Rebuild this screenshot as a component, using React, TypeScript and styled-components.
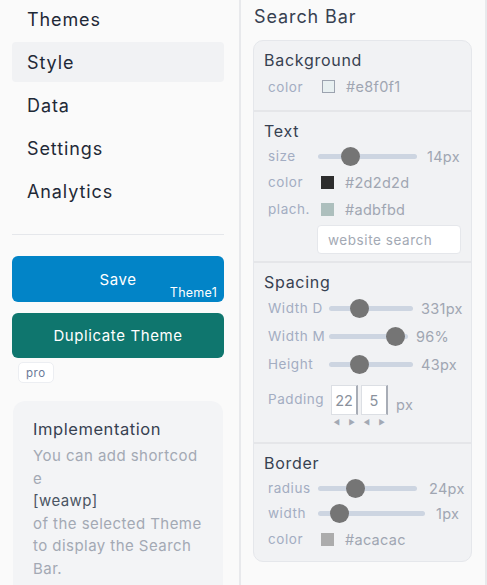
import React from "react";
import styled, { createGlobalStyle } from "styled-components";

const Global = createGlobalStyle`
  html, body { margin: 0; padding: 0; background: #fafafa; }
  body { font-family: "Inter", "Noto Sans", sans-serif; letter-spacing: 0.035em; -webkit-font-smoothing: antialiased; }
  input { letter-spacing: inherit; }
  * { box-sizing: border-box; }
`;

const Page = styled.div`
  display: flex;
  width: 487px;
  height: 585px;
  overflow: hidden;
  background: #fafafa;
`;

const Sidebar = styled.aside`
  width: 241px;
  flex: none;
  padding: 0 15px 0 12px;
  border-right: 2px solid #e8e9ec;
  display: flex;
  flex-direction: column;
`;

const Nav = styled.nav`
  display: flex;
  flex-direction: column;
  gap: 3px;
  margin-top: -1px;
`;

const NavItem = styled.div<{ $active?: boolean }>`
  height: 40px;
  display: flex;
  align-items: center;
  padding-left: 15px;
  font-size: 18px;
  letter-spacing: 0.05em;
  color: #1f2937;
  border-radius: 4px;
  background: ${(p) => (p.$active ? "#f1f2f4" : "transparent")};
`;

const Divider = styled.hr`
  border: none;
  height: 1px;
  background: #e5e7eb;
  margin: 23px 0 21px;
`;

const Button = styled.button<{ $bg: string; $h: number }>`
  position: relative;
  width: 100%;
  height: ${(p) => p.$h}px;
  border: none;
  border-radius: 6px;
  background: ${(p) => p.$bg};
  color: #fff;
  font-family: inherit;
  letter-spacing: 0.04em;
  font-size: 15px;
  display: flex;
  align-items: center;
  justify-content: center;
  padding: 0;
`;

const ButtonTag = styled.span`
  position: absolute;
  right: 7px;
  bottom: 2px;
  font-size: 12.5px;
  letter-spacing: 0.02em;
`;

const DupButton = styled(Button)`
  margin-top: 11px;
`;

const ProBadge = styled.span`
  align-self: flex-start;
  margin: 4px 0 0 6px;
  height: 21px;
  padding: 0 7px;
  display: flex;
  align-items: center;
  font-size: 11.5px;
  color: #6b7a99;
  background: #fff;
  border: 1px solid #eceef2;
  border-radius: 5px;
`;

const InfoBox = styled.div`
  margin: 18px 1px 0 1px;
  flex: 1;
  background: #f3f4f6;
  border-radius: 12px 12px 0 0;
  padding: 16px 17px 0 20px;
`;

const InfoTitle = styled.div`
  font-size: 16.5px;
  color: #374151;
  line-height: 24px;
  margin-bottom: 4px;
`;

const InfoText = styled.div`
  font-size: 15px;
  line-height: 22.5px;
  letter-spacing: 0.03em;
  color: #a3a9b4;
  word-break: break-all;
`;

const Code = styled.div`
  color: #4b5563;
`;

const InfoTail = styled.div`
  word-break: normal;
`;

const Main = styled.main`
  width: 246px;
  flex: none;
  border-right: 2px solid #e8e9ec;
  padding: 0 13px 0 12px;
`;

const MainTitle = styled.h2`
  margin: 0;
  height: 40px;
  padding-top: 5px;
  padding-left: 1px;
  font-size: 18px;
  font-weight: 400;
  line-height: 24px;
  letter-spacing: 0.05em;
  color: #374151;
`;

const Card = styled.div`
  background: #f1f2f4;
  border: 1px solid #e5e7eb;
  border-radius: 10px;
  overflow: hidden;
`;

const Section = styled.section<{ $pb: number }>`
  padding: 7px 10px ${(p) => p.$pb}px 10px;
  & + & {
    border-top: 2px solid #e5e6e9;
  }
`;

const SectionTitle = styled.div`
  font-size: 16px;
  line-height: 24px;
  letter-spacing: 0.045em;
  color: #374151;
`;

const Row = styled.div<{ $h: number; $label: number }>`
  height: ${(p) => p.$h}px;
  display: grid;
  grid-template-columns: ${(p) => p.$label}px auto auto;
  justify-content: start;
  align-items: center;
  padding-left: 4px;
`;

const Label = styled.span`
  font-size: 13.5px;
  color: #a3adc2;
`;

const Value = styled.span<{ $gap: number }>`
  margin-left: ${(p) => p.$gap}px;
  font-size: 14.5px;
  letter-spacing: 0.02em;
  color: #a0a6b2;
`;

const Swatch = styled.span<{ $color: string; $border?: boolean }>`
  width: 13px;
  height: 13px;
  margin-left: 3px;
  background: ${(p) => p.$color};
  border: ${(p) => (p.$border ? "1px solid #9ca3af" : "none")};
`;

const Track = styled.div<{ $w: number }>`
  position: relative;
  width: ${(p) => p.$w}px;
  height: 5px;
  border-radius: 3px;
  background: #cdd5e1;
`;

const Thumb = styled.span`
  position: absolute;
  top: 50%;
  width: 19px;
  height: 19px;
  margin: -9.5px 0 0 -9.5px;
  border-radius: 50%;
  background: #757575;
`;

const SearchInput = styled.input`
  display: block;
  margin: 2px 0 0 53px;
  width: 144px;
  height: 29px;
  border: 1px solid #e5e7eb;
  border-radius: 4px;
  background: #fff;
  padding: 0 10px;
  font-family: inherit;
  font-size: 13.5px;
  &::placeholder { color: #a3a9b4; }
`;

const PadRow = styled.div`
  display: flex;
  align-items: flex-start;
  padding-left: 4px;
  margin-top: 7px;
`;

const PadLabel = styled(Label)`
  width: 63px;
  margin-top: 6px;
`;

const PadGroup = styled.div`
  display: flex;
  flex-direction: column;
  align-items: center;
`;

const PadBox = styled.div`
  width: 27px;
  height: 30px;
  background: #fff;
  border: 1px solid #dcdfe4;
  border-right: 2px solid #a8adb6;
  display: flex;
  align-items: center;
  justify-content: center;
  font-size: 14.5px;
  letter-spacing: 0;
  color: #8a919c;
`;

const PadArrows = styled.div`
  display: flex;
  gap: 8px;
  margin-top: 3px;
  font-size: 7px;
  color: #a3a9b4;
  line-height: 10px;
`;

const PadUnit = styled.span`
  margin: 11px 0 0 8px;
  font-size: 14.5px;
  color: #a0a6b2;
`;

const PadBoxes = styled.div`
  display: flex;
  gap: 3px;
`;

const Slider = ({ w, pos }: { w: number; pos: number }) => (
  <Track $w={w}>
    <Thumb style={{ left: pos }} />
  </Track>
);

const Pad = ({ v }: { v: string }) => (
  <PadGroup>
    <PadBox>{v}</PadBox>
    <PadArrows>
      <span>◀</span>
      <span>▶</span>
    </PadArrows>
  </PadGroup>
);

export default function App() {
  return (
    <Page>
      <Global />
      <Sidebar>
        <Nav>
          <NavItem>Themes</NavItem>
          <NavItem $active>Style</NavItem>
          <NavItem>Data</NavItem>
          <NavItem>Settings</NavItem>
          <NavItem>Analytics</NavItem>
        </Nav>
        <Divider />
        <Button $bg="#0284c7" $h={46}>
          Save
          <ButtonTag>Theme1</ButtonTag>
        </Button>
        <DupButton $bg="#0f766e" $h={45}>Duplicate Theme</DupButton>
        <ProBadge>pro</ProBadge>
        <InfoBox>
          <InfoTitle>Implementation</InfoTitle>
          <InfoText>
            You can add shortcode
            <Code>[weawp]</Code>
            <InfoTail>of the selected Theme to display the Search Bar.</InfoTail>
          </InfoText>
        </InfoBox>
      </Sidebar>
      <Main>
        <MainTitle>Search Bar</MainTitle>
        <Card>
          <Section $pb={9}>
            <SectionTitle>Background</SectionTitle>
            <Row $h={29} $label={51}>
              <Label>color</Label>
              <Swatch $color="#e8f0f1" $border />
              <Value $gap={11}>#e8f0f1</Value>
            </Row>
          </Section>
          <Section $pb={7}>
            <SectionTitle>Text</SectionTitle>
            <Row $h={26} $label={50}>
              <Label>size</Label>
              <Slider w={99} pos={32} />
              <Value $gap={10}>14px</Value>
            </Row>
            <Row $h={26} $label={50}>
              <Label>color</Label>
              <Swatch $color="#2d2d2d" />
              <Value $gap={11}>#2d2d2d</Value>
            </Row>
            <Row $h={28} $label={50}>
              <Label>plach.</Label>
              <Swatch $color="#adbfbd" />
              <Value $gap={11}>#adbfbd</Value>
            </Row>
            <SearchInput placeholder="website search" />
          </Section>
          <Section $pb={14}>
            <SectionTitle>Spacing</SectionTitle>
            <Row $h={28} $label={61}>
              <Label>Width D</Label>
              <Slider w={84} pos={30} />
              <Value $gap={8}>331px</Value>
            </Row>
            <Row $h={28} $label={61}>
              <Label>Width M</Label>
              <Slider w={79} pos={66} />
              <Value $gap={8}>96%</Value>
            </Row>
            <Row $h={28} $label={61}>
              <Label>Height</Label>
              <Slider w={84} pos={30} />
              <Value $gap={8}>43px</Value>
            </Row>
            <PadRow>
              <PadLabel>Padding</PadLabel>
              <PadBoxes>
                <Pad v="22" />
                <Pad v="5" />
              </PadBoxes>
              <PadUnit>px</PadUnit>
            </PadRow>
          </Section>
          <Section $pb={8}>
            <SectionTitle>Border</SectionTitle>
            <Row $h={26} $label={50}>
              <Label>radius</Label>
              <Slider w={99} pos={37} />
              <Value $gap={12}>24px</Value>
            </Row>
            <Row $h={24} $label={50}>
              <Label>width</Label>
              <Slider w={107} pos={21} />
              <Value $gap={11}>1px</Value>
            </Row>
            <Row $h={28} $label={50}>
              <Label>color</Label>
              <Swatch $color="#acacac" />
              <Value $gap={11}>#acacac</Value>
            </Row>
          </Section>
        </Card>
      </Main>
    </Page>
  );
}
